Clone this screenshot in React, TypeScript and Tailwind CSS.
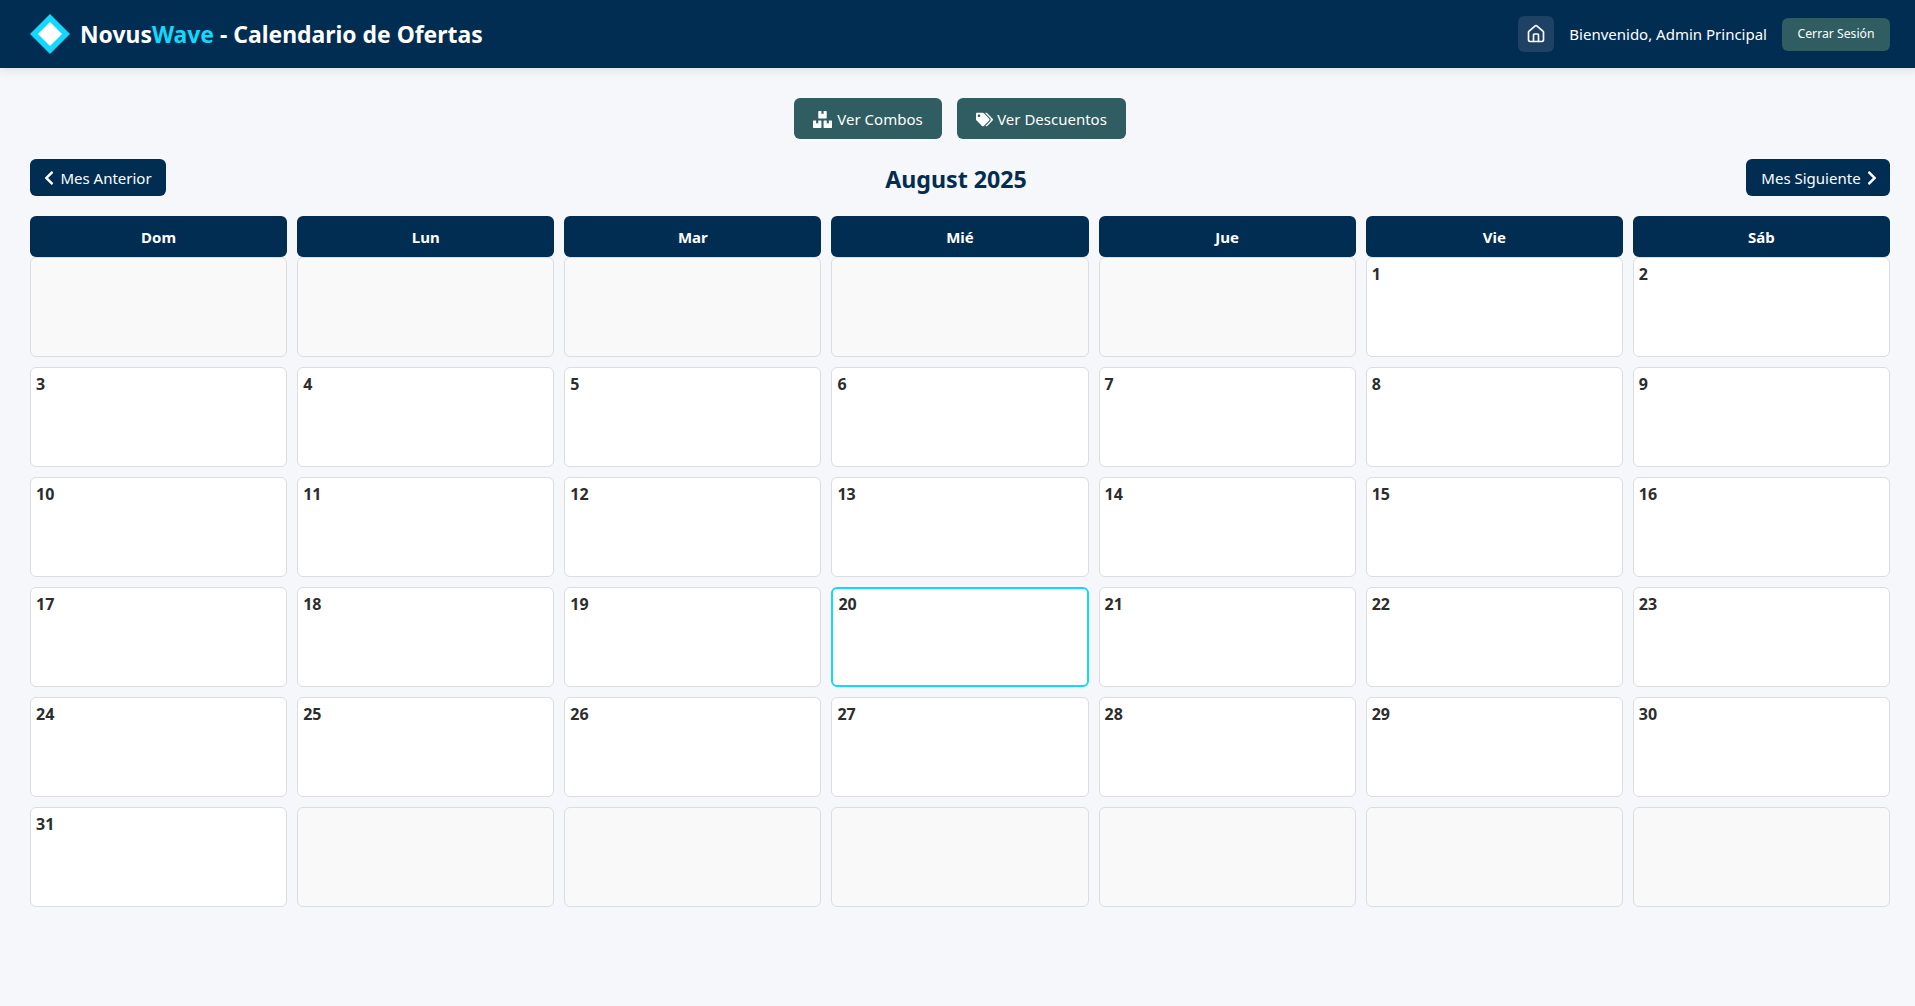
import { House } from 'lucide-react';
import { FaBoxes, FaChevronLeft, FaChevronRight, FaTags } from 'react-icons/fa';

const weekDays = ['Dom', 'Lun', 'Mar', 'Mié', 'Jue', 'Vie', 'Sáb'];

// Agosto 2025 empieza en viernes: 5 celdas vacías al inicio
const cells: (number | null)[] = [
  ...Array(5).fill(null),
  ...Array.from({ length: 31 }, (_, i) => i + 1),
  ...Array(6).fill(null),
];

function DayCell({ day }: { day: number | null }) {
  if (day === null) {
    return <div className="h-[100px] rounded-md border border-[#dcdde1] bg-[#f9f9f9]" />;
  }
  if (day === 20) {
    return (
      <div className="h-[100px] rounded-md border-2 border-[#14d8fb] bg-white px-[5px] py-[3px] text-base font-bold text-[#2d2d2d]">
        {day}
      </div>
    );
  }
  return (
    <div className="h-[100px] rounded-md border border-[#dcdde1] bg-white px-[5px] py-[4px] text-base font-bold text-[#2d2d2d]">
      {day}
    </div>
  );
}

export default function App() {
  return (
    <div className="h-[1006px] overflow-hidden bg-[#f5f7fb] font-['Noto_Sans',sans-serif]">
      <div className="w-[1920px]">
        <header className="flex h-[68px] items-center justify-between bg-[#012d52] px-[30px] shadow-[0_2px_10px_rgba(0,0,0,0.1)]">
          <div className="flex items-center gap-[10px]">
            <svg width="40" height="40" viewBox="0 0 40 40">
              <path d="M20 0 L40 20 L20 40 L0 20 Z" fill="#14d8fb" />
              <path d="M20 8 L32 20 L20 32 L8 20 Z" fill="#ffffff" />
            </svg>
            <h1 className="pt-[2px] text-[22.9px] font-bold text-white">
              Novus<span className="text-[#14d8fb]">Wave</span> - Calendario de Ofertas
            </h1>
          </div>
          <div className="flex items-center">
            <button className="flex h-9 w-9 items-center justify-center rounded-md bg-[#1d4263] text-white">
              <House size={20} strokeWidth={2} />
            </button>
            <span className="ml-[15px] text-[15px] text-white">Bienvenido, Admin Principal</span>
            <button className="ml-[15px] flex h-[33px] w-[108px] items-center justify-center rounded-md bg-[#2f5d62] pt-[1px] text-[12.2px] text-white">
              Cerrar Sesión
            </button>
          </div>
        </header>

        <main className="px-[30px] pt-[30px]">
          <div className="flex justify-center gap-[15px]">
            <button className="flex h-[41px] w-[148px] items-center justify-center gap-[5px] rounded-md bg-[#2f5d62] pt-[1px] text-[15px] text-white">
              <FaBoxes size={19} />
              Ver Combos
            </button>
            <button className="flex h-[41px] w-[169px] items-center justify-center gap-[4px] rounded-md bg-[#2f5d62] pt-[1px] text-[15px] text-white">
              <FaTags size={17} />
              Ver Descuentos
            </button>
          </div>

          <div className="mt-5 flex h-[37px] items-center justify-between">
            <button className="flex h-[37px] w-[136px] items-center justify-center gap-[3px] rounded-md bg-[#012d52] pt-[1px] pr-[3px] text-[15px] text-white">
              <FaChevronLeft size={16} />
              Mes Anterior
            </button>
            <h2 className="mt-[4px] text-[23.2px] font-bold text-[#012d52]">August 2025</h2>
            <button className="flex h-[37px] w-[144px] items-center justify-center gap-[3px] rounded-md bg-[#012d52] pt-[1px] pl-[5px] text-[15px] text-white">
              Mes Siguiente
              <FaChevronRight size={16} />
            </button>
          </div>

          <div className="mt-5 grid grid-cols-7 gap-x-[10px]">
            {weekDays.map((d) => (
              <div
                key={d}
                className="flex h-[41px] items-center justify-center rounded-md bg-[#012d52] pt-[2px] text-[15px] font-bold text-white"
              >
                {d}
              </div>
            ))}
          </div>
          <div className="grid grid-cols-7 gap-[10px]">
            {cells.map((day, i) => (
              <DayCell key={i} day={day} />
            ))}
          </div>
        </main>
      </div>
    </div>
  );
}
